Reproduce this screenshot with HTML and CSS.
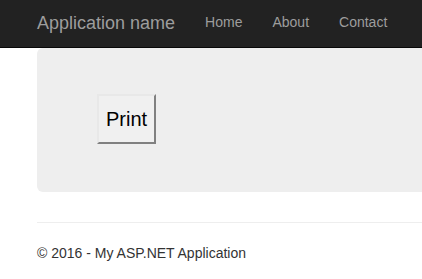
FILE: index.html
```html
<!DOCTYPE html>
<html lang="en">
<head>
    <meta charset="UTF-8">
    <meta name="viewport" content="width=device-width, initial-scale=1.0">
    <title>Home Page - My ASP.NET Application</title>
    <link rel="stylesheet" href="styles.css">
</head>
<body>
    <div class="navbar">
        <div class="navbar-inner">
            <a class="navbar-brand" href="#">Application name</a>
            <ul class="nav">
                <li><a href="#">Home</a></li>
                <li><a href="#">About</a></li>
                <li><a href="#">Contact</a></li>
            </ul>
        </div>
    </div>

    <div class="container body-content">
        <div class="jumbotron">
            <button type="button" class="print-btn">Print</button>
        </div>
        <hr>
        <footer>
            <p>&copy; 2016 - My ASP.NET Application</p>
        </footer>
    </div>
</body>
</html>
```

FILE: styles.css
```css
body {
    margin: 0;
    padding: 0;
    font-family: "Liberation Sans", Arial, sans-serif;
    font-size: 14px;
    line-height: 20px;
    color: #333;
    background: #fff;
    overflow: hidden;
}
.navbar {
    background: #222;
    border-bottom: 1px solid #080808;
    height: 47px;
}
.navbar-inner {
    display: flex;
    align-items: flex-start;
    height: 47px;
    padding-left: 22px;
}
.navbar-brand {
    padding: 13px 15px 0;
    font-size: 18px;
    line-height: 20px;
    color: #9d9d9d;
    text-decoration: none;
}
.nav {
    display: flex;
    list-style: none;
    margin: 0;
    padding: 12px 0 0;
}
.nav a {
    display: block;
    padding: 0 15px;
    color: #9d9d9d;
    text-decoration: none;
    line-height: 20px;
}
.container {
    padding-left: 37px;
}
.jumbotron {
    background: #eee;
    border-radius: 6px 0 0 6px;
    padding: 46px 60px 48px;
}
.print-btn {
    display: block;
    font-family: "Liberation Sans", Arial, sans-serif;
    font-size: 20px;
    line-height: 24px;
    padding: 11px 7px;
    color: #000;
    background: #f0f0f0;
    border: 2px solid;
    border-color: #e8e8e8 #808080 #808080 #e8e8e8;
    border-radius: 0;
}
hr {
    margin: 30px 0 20px;
    border: 0;
    border-top: 1px solid #eee;
}
footer p {
    margin: 0;
}
```
